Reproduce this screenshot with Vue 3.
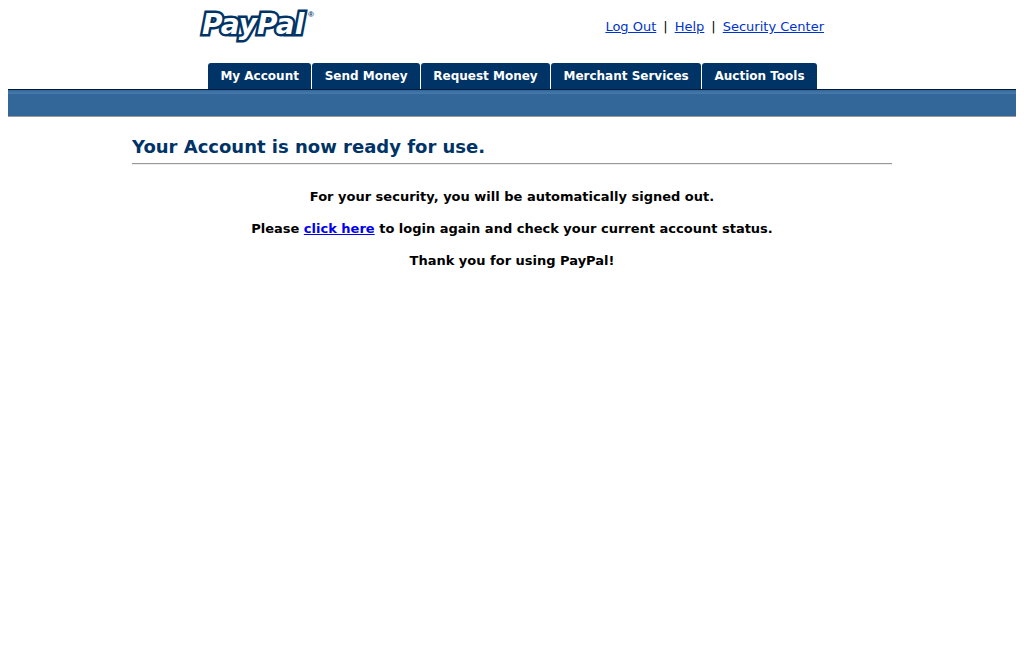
<script setup>
const links = ['Log Out', 'Help', 'Security Center']
const tabs = ['My Account', 'Send Money', 'Request Money', 'Merchant Services', 'Auction Tools']
</script>

<template>
  <div class="page">
    <header>
      <div class="top">
        <a class="brand" href="#" aria-label="PayPal">
          <svg width="120" height="44" viewBox="0 0 120 44" aria-hidden="true">
            <text class="mark outline" x="2" y="26">PayPal</text>
            <text class="mark" x="2" y="26">PayPal</text>
            <text class="reg" x="108" y="9">®</text>
          </svg>
        </a>
        <nav class="links">
          <template v-for="(l, i) in links" :key="l">
            <span v-if="i">|</span>
            <a href="#">{{ l }}</a>
          </template>
        </nav>
      </div>
      <nav class="tabs">
        <a v-for="t in tabs" :key="t" href="#">{{ t }}</a>
      </nav>
      <div class="bar"></div>
    </header>
    <main>
      <h1>Your Account is now ready for use.</h1>
      <hr>
      <div class="message">
        <p>For your security, you will be automatically signed out.</p>
        <p>Please <a href="#">click here</a> to login again and check your current account status.</p>
        <p>Thank you for using PayPal!</p>
      </div>
    </main>
  </div>
</template>

<style>
body {
  background: #fff;
}
</style>

<style scoped>
.page {
  padding: 8px;
  font-family: Verdana, "DejaVu Sans", sans-serif;
  font-size: 13px;
  line-height: 16px;
  color: #000;
}
.top {
  display: flex;
  justify-content: space-between;
  max-width: 624px;
  height: 55px;
  margin: 0 auto;
}
.brand {
  display: block;
}
.brand svg {
  display: block;
  overflow: visible;
}
.mark {
  font: italic bold 28px "DejaVu Sans", sans-serif;
  fill: #fff;
}
.outline {
  stroke: #003366;
  stroke-width: 5px;
  stroke-linejoin: miter;
  stroke-miterlimit: 2;
}
.reg {
  font: bold 8px "Liberation Sans", sans-serif;
  fill: #003366;
}
.links {
  display: flex;
  gap: 7px;
  padding-top: 11px;
}
.links a {
  color: #0033cc;
}
.tabs {
  display: flex;
  gap: 1px;
  box-sizing: border-box;
  max-width: 624px;
  margin: 0 auto;
  padding: 0 7px 0 8px;
}
.tabs a {
  flex: 1 1 auto;
  padding: 5px 12px;
  border-radius: 3px 3px 0 0;
  background: #003366;
  color: #fff;
  font-size: 12px;
  font-weight: bold;
  text-align: center;
  text-decoration: none;
  white-space: nowrap;
}
.bar {
  height: 26px;
  border-top: 1px solid #001a3a;
  border-bottom: 1px solid #999;
  background: linear-gradient(#336699, #4477aa 3px, #4477aa 4px, #336699 4px);
}
main {
  max-width: 760px;
  margin: 0 auto;
}
h1 {
  margin: 18px 0 4px;
  font-size: 18px;
  line-height: 24px;
  color: #003366;
}
hr {
  margin: 0;
  border: 0;
  border-top: 1px solid #999;
  border-bottom: 1px solid #eee;
}
.message {
  padding-top: 24px;
  font-weight: bold;
  text-align: center;
}
.message p {
  margin: 0 0 16px;
}
.message a {
  color: #0000ee;
}
</style>
